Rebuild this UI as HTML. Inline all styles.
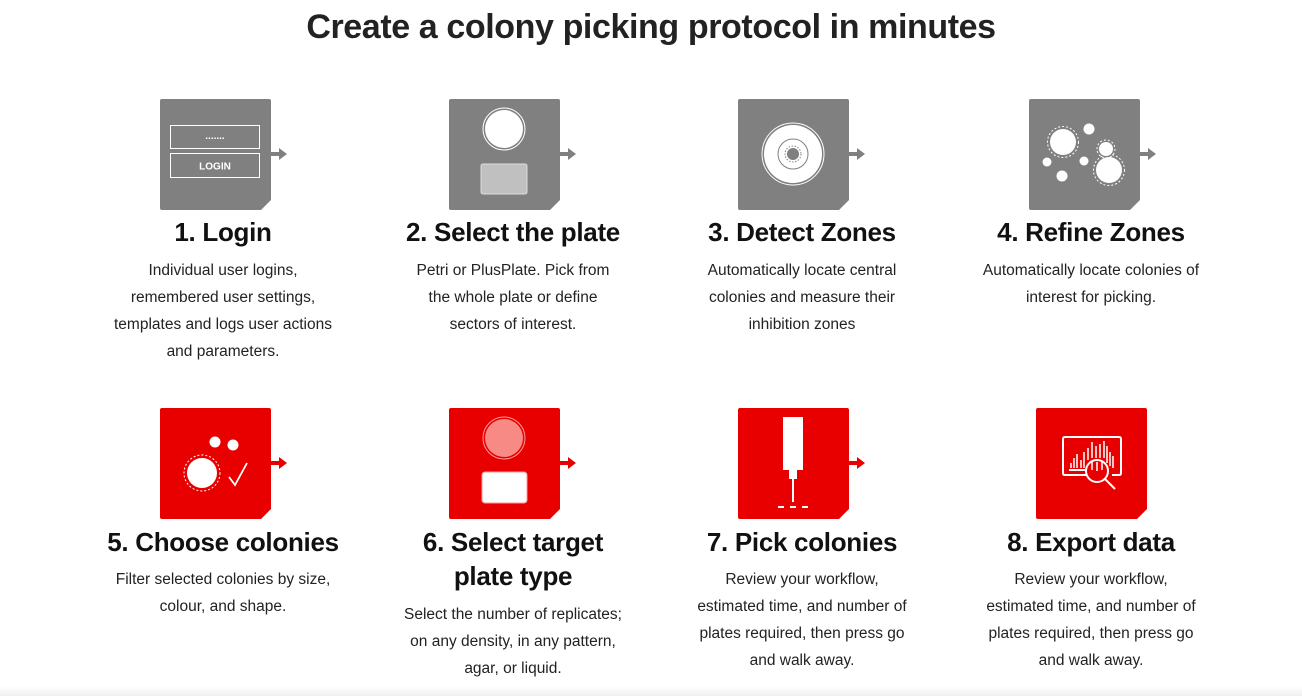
<!DOCTYPE html>
<html><head><meta charset="utf-8"><style>
body{margin:0;width:1302px;height:696px;background:#fff;position:relative;overflow:hidden;font-family:"Liberation Sans",sans-serif;color:#222}
h1{position:absolute;top:8px;left:0;width:1302px;text-align:center;margin:0;font-size:34px;font-weight:bold;color:#222;letter-spacing:-0.4px}
.ic{position:absolute;width:130px;height:111px}
.t{position:absolute;width:300px;text-align:center;font-weight:bold;font-size:26px;line-height:34px;color:#111;letter-spacing:-0.3px}
.d{position:absolute;width:300px;text-align:center;font-size:15.5px;line-height:27px;color:#222}
.sh{position:absolute;left:0;right:0;bottom:0;height:10px;background:linear-gradient(to bottom,rgba(0,0,0,0),rgba(0,0,0,0.06))}
</style></head><body>
<h1>Create a colony picking protocol in minutes</h1>

<svg width="0" height="0" style="position:absolute"><defs>
<path id="bx" d="M2 0H109Q111 0 111 2V101L101 111H2Q0 111 0 109V2Q0 0 2 0Z"/>
<path id="ar" d="M111 53H119V49L127 55L119 61V57H111Z"/>
</defs></svg>

<!-- 1 -->
<svg class="ic" style="left:160px;top:99px" viewBox="0 0 130 111"><g fill="#808080"><use href="#bx"/><use href="#ar"/></g>
<rect x="10.5" y="26.5" width="89" height="23" fill="none" stroke="#fff"/><text x="55" y="40" fill="#fff" font-size="10" font-weight="bold" text-anchor="middle">.......</text>
<rect x="10.5" y="54.5" width="89" height="24" fill="none" stroke="#fff"/><text x="55" y="70.5" fill="#fff" font-size="10" font-weight="bold" text-anchor="middle">LOGIN</text></svg>
<!-- 2 -->
<svg class="ic" style="left:449px;top:99px" viewBox="0 0 130 111"><g fill="#808080"><use href="#bx"/><use href="#ar"/></g>
<circle cx="55" cy="30" r="21" fill="none" stroke="#fff" stroke-width="1"/><circle cx="55" cy="30" r="19" fill="#fff"/>
<rect x="32" y="65" width="46" height="30" rx="2" fill="#c0c0c0" stroke="#ddd"/></svg>
<!-- 3 -->
<svg class="ic" style="left:738px;top:99px" viewBox="0 0 130 111"><g fill="#808080"><use href="#bx"/><use href="#ar"/></g>
<circle cx="55" cy="55" r="31" fill="none" stroke="#fff"/><circle cx="55" cy="55" r="29" fill="#fff"/>
<circle cx="55" cy="55" r="15" fill="none" stroke="#808080"/><circle cx="55" cy="55" r="8" fill="none" stroke="#808080" stroke-dasharray="1.5 1.5"/><circle cx="55" cy="55" r="6" fill="#808080"/></svg>
<!-- 4 -->
<svg class="ic" style="left:1029px;top:99px" viewBox="0 0 130 111"><g fill="#808080"><use href="#bx"/><use href="#ar"/></g>
<g fill="#fff"><circle cx="34" cy="43" r="13"/><circle cx="77" cy="50" r="7"/><circle cx="80" cy="71" r="13"/><circle cx="60" cy="30" r="5.5"/><circle cx="18" cy="63" r="4.5"/><circle cx="55" cy="62" r="4.5"/><circle cx="33" cy="77" r="5.5"/></g>
<g fill="none" stroke="#fff" stroke-dasharray="2 2"><circle cx="34" cy="43" r="15.5"/><circle cx="77" cy="50" r="9"/><circle cx="80" cy="71" r="15.5"/></g></svg>
<!-- 5 -->
<svg class="ic" style="left:160px;top:408px" viewBox="0 0 130 111"><g fill="#e80000"><use href="#bx"/><use href="#ar"/></g>
<g fill="#fff"><circle cx="42" cy="65" r="15"/><circle cx="55" cy="34" r="5.5"/><circle cx="73" cy="37" r="5.5"/></g>
<circle cx="42" cy="65" r="18" fill="none" stroke="#fff" stroke-dasharray="2 2"/>
<path d="M69 69L75 77L87 55" fill="none" stroke="#fff" stroke-width="1.8"/></svg>
<!-- 6 -->
<svg class="ic" style="left:449px;top:408px" viewBox="0 0 130 111"><g fill="#e80000"><use href="#bx"/><use href="#ar"/></g>
<circle cx="55" cy="30" r="21" fill="none" stroke="#f99" stroke-width="1"/><circle cx="55" cy="30" r="19" fill="#f78a84"/>
<rect x="33" y="64" width="45" height="31" rx="3" fill="#fff" stroke="#f99"/></svg>
<!-- 7 -->
<svg class="ic" style="left:738px;top:408px" viewBox="0 0 130 111"><g fill="#e80000"><use href="#bx"/><use href="#ar"/></g>
<g fill="#fff"><rect x="45" y="9" width="20" height="53"/><rect x="51" y="62" width="8" height="9"/><rect x="54" y="71" width="2" height="23"/><rect x="40" y="98" width="6" height="2"/><rect x="52" y="98" width="6" height="2"/><rect x="64" y="98" width="6" height="2"/></g></svg>
<!-- 8 -->
<svg class="ic" style="left:1036px;top:408px" viewBox="0 0 130 111"><use href="#bx" fill="#e80000"/>
<g fill="none" stroke="#fff" stroke-width="2"><path d="M50 67H29Q27 67 27 65V31Q27 29 29 29H83Q85 29 85 31V65Q85 67 83 67H76"/><circle cx="61" cy="63" r="11"/><path d="M69 71L79 81"/><path d="M33 62H50"/></g>
<g stroke="#fff" stroke-width="1.5"><path d="M35 60V55M38 60V50M41 60V46M45 60V52M48 60V44M52 52V40M56 50V34M60 50V38M64 50V36M68 50V33M71 55V38M74 58V44M77 60V48M56 54V62M61 54V63M66 54V62"/></g></svg>

<div class="t" style="left:73px;top:215px">1. Login</div>
<div class="d" style="left:73px;top:257px">Individual user logins,<br>remembered user settings,<br>templates and logs user actions<br>and parameters.</div>
<div class="t" style="left:363px;top:215px">2. Select the plate</div>
<div class="d" style="left:363px;top:257px">Petri or PlusPlate. Pick from<br>the whole plate or define<br>sectors of interest.</div>
<div class="t" style="left:652px;top:215px">3. Detect Zones</div>
<div class="d" style="left:652px;top:257px">Automatically locate central<br>colonies and measure their<br>inhibition zones</div>
<div class="t" style="left:941px;top:215px">4. Refine Zones</div>
<div class="d" style="left:941px;top:257px">Automatically locate colonies of<br>interest for picking.</div>

<div class="t" style="left:73px;top:525px">5. Choose colonies</div>
<div class="d" style="left:73px;top:566px">Filter selected colonies by size,<br>colour, and shape.</div>
<div class="t" style="left:363px;top:525px">6. Select target<br>plate type</div>
<div class="d" style="left:363px;top:601px">Select the number of replicates;<br>on any density, in any pattern,<br>agar, or liquid.</div>
<div class="t" style="left:652px;top:525px">7. Pick colonies</div>
<div class="d" style="left:652px;top:566px">Review your workflow,<br>estimated time, and number of<br>plates required, then press go<br>and walk away.</div>
<div class="t" style="left:941px;top:525px">8. Export data</div>
<div class="d" style="left:941px;top:566px">Review your workflow,<br>estimated time, and number of<br>plates required, then press go<br>and walk away.</div>
<div class="sh"></div>
</body></html>
